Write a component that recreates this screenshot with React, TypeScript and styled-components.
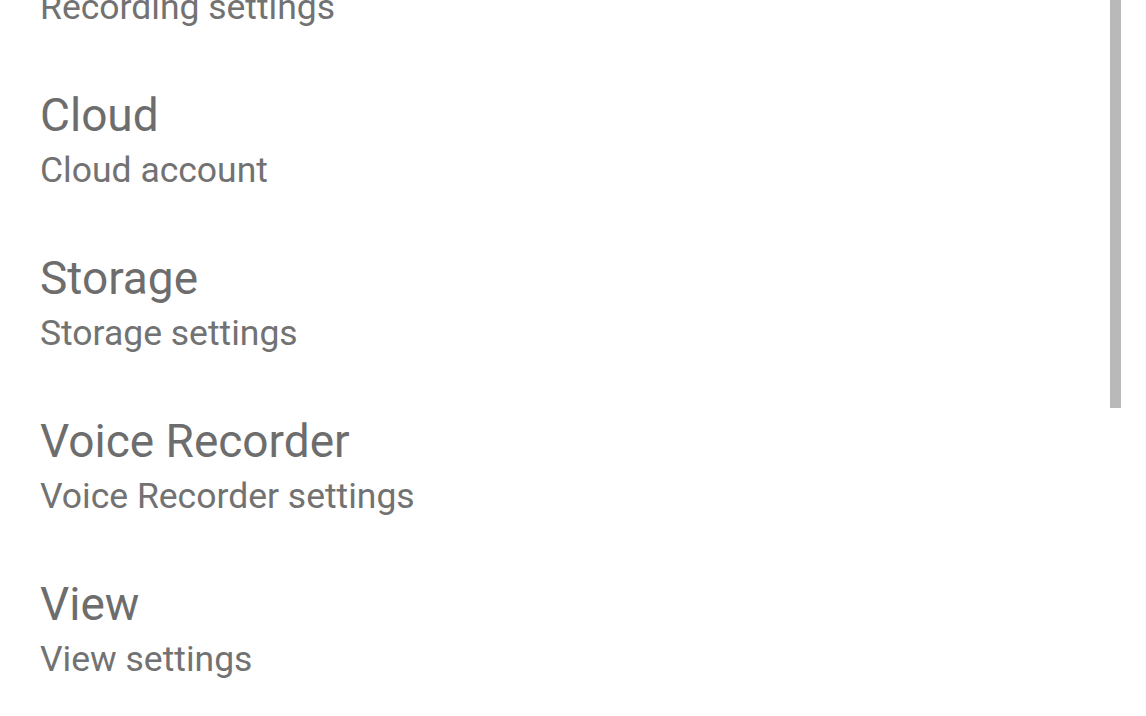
import styled, { createGlobalStyle } from 'styled-components';

const GlobalStyle = createGlobalStyle`
  html, body {
    margin: 0;
    padding: 0;
    background: #ffffff;
  }
  body {
    font-family: Roboto, "Noto Sans", "Liberation Sans", sans-serif;
  }
`;

const Screen = styled.div`
  position: relative;
  width: 1146px;
  height: 716px;
  overflow: hidden;
  background: #ffffff;
`;

// the list is scrolled down a little, so the first row is cut at the top
const List = styled.ul`
  list-style: none;
  margin: -105px 0 0;
  padding: 0;
`;

const Item = styled.li`
  display: flex;
  flex-direction: column;
  justify-content: center;
  gap: 8px;
  height: 163px;
  box-sizing: border-box;
  padding: 0 40px;
`;

const Title = styled.div`
  font-size: 46px;
  line-height: 54px;
  color: #6d6d6d;
`;

const Subtitle = styled.div`
  font-size: 35.5px;
  line-height: 41px;
  color: #727272;
`;

const ScrollThumb = styled.div`
  position: absolute;
  top: 0;
  left: 1110px;
  width: 11px;
  height: 408px;
  background: #b9b9b9;
`;

const items = [
  { title: 'Recording', subtitle: 'Recording settings' },
  { title: 'Cloud', subtitle: 'Cloud account' },
  { title: 'Storage', subtitle: 'Storage settings' },
  { title: 'Voice Recorder', subtitle: 'Voice Recorder settings' },
  { title: 'View', subtitle: 'View settings' },
];

export default function App() {
  return (
    <>
      <GlobalStyle />
      <Screen>
        <List>
          {items.map((item) => (
            <Item key={item.title}>
              <Title>{item.title}</Title>
              <Subtitle>{item.subtitle}</Subtitle>
            </Item>
          ))}
        </List>
        <ScrollThumb />
      </Screen>
    </>
  );
}
